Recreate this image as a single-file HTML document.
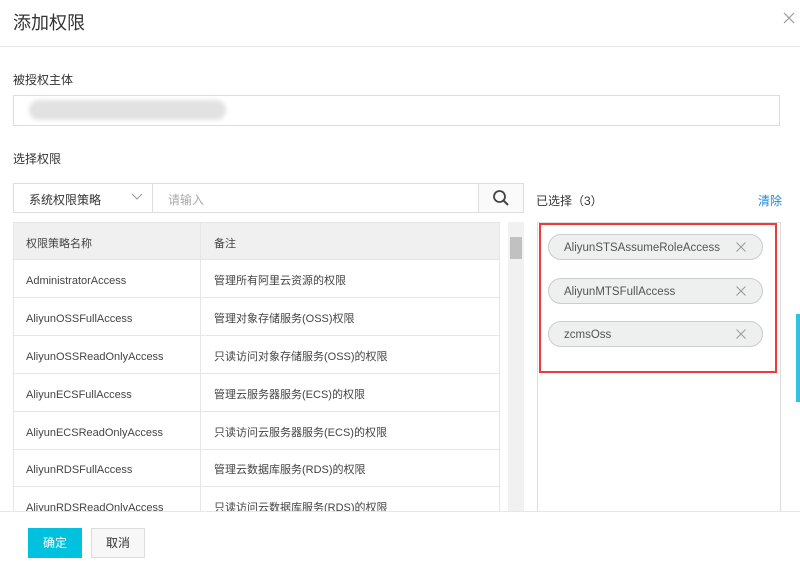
<!DOCTYPE html>
<html><head><meta charset="utf-8"><style>
*{box-sizing:border-box;margin:0;padding:0}
body{width:800px;height:567px;overflow:hidden;background:#fff;font-family:"Liberation Sans","Noto Sans CJK SC",sans-serif;color:#333;font-size:12px;position:relative}
.a{position:absolute}
.row{position:absolute;left:13px;width:487px;height:38px;border-bottom:1px solid #e6e6e6;border-left:1px solid #e6e6e6;border-right:1px solid #e6e6e6}
.row span{position:absolute;top:3px;line-height:37px;font-size:11px;color:#444}
.row .c1{left:12px}.row .c2{left:200px}
.row:before{content:"";position:absolute;left:186px;top:0;bottom:0;border-left:1px solid #e6e6e6}
.tag{position:absolute;left:548px;width:215px;height:26px;border:1px solid #ccc;border-radius:13px;background:#eeefef;font-size:11.5px;color:#555;padding:1px 0 0 15px;line-height:24px}
.tag svg{position:absolute;right:16px;top:7px}
</style></head><body>
<div class="a" style="left:13px;top:9px;font-size:18px;color:#333">添加权限</div>
<svg class="a" style="left:783px;top:12px" width="12" height="12"><path d="M1 1l10 10M11 1L1 11" stroke="#999" stroke-width="1.2"/></svg>
<div class="a" style="left:0;top:46px;width:800px;border-top:1px solid #e6e6e6"></div>
<div class="a" style="left:13px;top:71px;font-size:12px">被授权主体</div>
<div class="a" style="left:13px;top:95px;width:767px;height:31px;border:1px solid #ddd"></div>
<div class="a" style="left:29px;top:100px;width:197px;height:20px;border-radius:10px;background:#e2e2e2;filter:blur(2px)"></div>
<div class="a" style="left:13px;top:150px;font-size:12px">选择权限</div>
<div class="a" style="left:13px;top:183px;width:511px;height:30px;border:1px solid #ddd"></div>
<div class="a" style="left:29px;top:191px;font-size:12px">系统权限策略</div>
<svg class="a" style="left:131px;top:193px" width="12" height="8"><path d="M1 1l5 5 5-5" fill="none" stroke="#999" stroke-width="1"/></svg>
<div class="a" style="left:152px;top:184px;height:28px;border-left:1px solid #ddd"></div>
<div class="a" style="left:168px;top:191px;color:#aaa">请输入</div>
<div class="a" style="left:478px;top:184px;width:45px;height:28px;border-left:1px solid #ddd;background:#fafafa"></div>
<svg class="a" style="left:492px;top:189px" width="18" height="18"><circle cx="7.5" cy="7.5" r="5.5" fill="none" stroke="#444" stroke-width="1.8"/><path d="M11.5 11.5l4.5 4.5" stroke="#444" stroke-width="2"/></svg>
<div class="row" style="top:222px;background:#f0f0f0;border-top:1px solid #e6e6e6"><span class="c1">权限策略名称</span><span class="c2">备注</span></div>
<div class="row" style="top:260px"><span class="c1">AdministratorAccess</span><span class="c2">管理所有阿里云资源的权限</span></div>
<div class="row" style="top:298px"><span class="c1">AliyunOSSFullAccess</span><span class="c2">管理对象存储服务(OSS)权限</span></div>
<div class="row" style="top:336px"><span class="c1">AliyunOSSReadOnlyAccess</span><span class="c2">只读访问对象存储服务(OSS)的权限</span></div>
<div class="row" style="top:374px"><span class="c1">AliyunECSFullAccess</span><span class="c2">管理云服务器服务(ECS)的权限</span></div>
<div class="row" style="top:412px"><span class="c1">AliyunECSReadOnlyAccess</span><span class="c2">只读访问云服务器服务(ECS)的权限</span></div>
<div class="row" style="top:449px"><span class="c1">AliyunRDSFullAccess</span><span class="c2">管理云数据库服务(RDS)的权限</span></div>
<div class="row" style="top:487px"><span class="c1">AliyunRDSReadOnlyAccess</span><span class="c2">只读访问云数据库服务(RDS)的权限</span></div>
<div class="a" style="left:508px;top:222px;width:16px;height:290px;background:#f1f1f1"></div>
<div class="a" style="left:510px;top:237px;width:12px;height:22px;background:#c1c1c1"></div>
<div class="a" style="left:536px;top:192px;font-size:12px">已选择（3）</div>
<div class="a" style="left:758px;top:192px;font-size:12px;color:#1e88d6">清除</div>
<div class="a" style="left:537px;top:222px;width:244px;height:290px;border:1px solid #ddd;border-bottom:none"></div>
<div class="a" style="left:539px;top:223px;width:238px;height:150px;border:2px solid #f03a3a"></div>
<div class="tag" style="top:234px">AliyunSTSAssumeRoleAccess<svg width="10" height="10"><path d="M0.5 0.5l9 9M9.5 0.5l-9 9" stroke="#999" stroke-width="1"/></svg></div>
<div class="tag" style="top:278px">AliyunMTSFullAccess<svg width="10" height="10"><path d="M0.5 0.5l9 9M9.5 0.5l-9 9" stroke="#999" stroke-width="1"/></svg></div>
<div class="tag" style="top:321px">zcmsOss<svg width="10" height="10"><path d="M0.5 0.5l9 9M9.5 0.5l-9 9" stroke="#999" stroke-width="1"/></svg></div>
<div class="a" style="left:796px;top:314px;width:4px;height:88px;background:#2ec3e0"></div>
<div class="a" style="left:0;top:511px;width:800px;height:56px;background:#fff;border-top:1px solid #e6e6e6"></div>
<div class="a" style="left:28px;top:528px;width:54px;height:30px;background:#00c1de;color:#fff;text-align:center;line-height:30px">确定</div>
<div class="a" style="left:91px;top:528px;width:54px;height:30px;background:#f7f7f7;border:1px solid #ddd;text-align:center;line-height:28px">取消</div>
</body></html>
